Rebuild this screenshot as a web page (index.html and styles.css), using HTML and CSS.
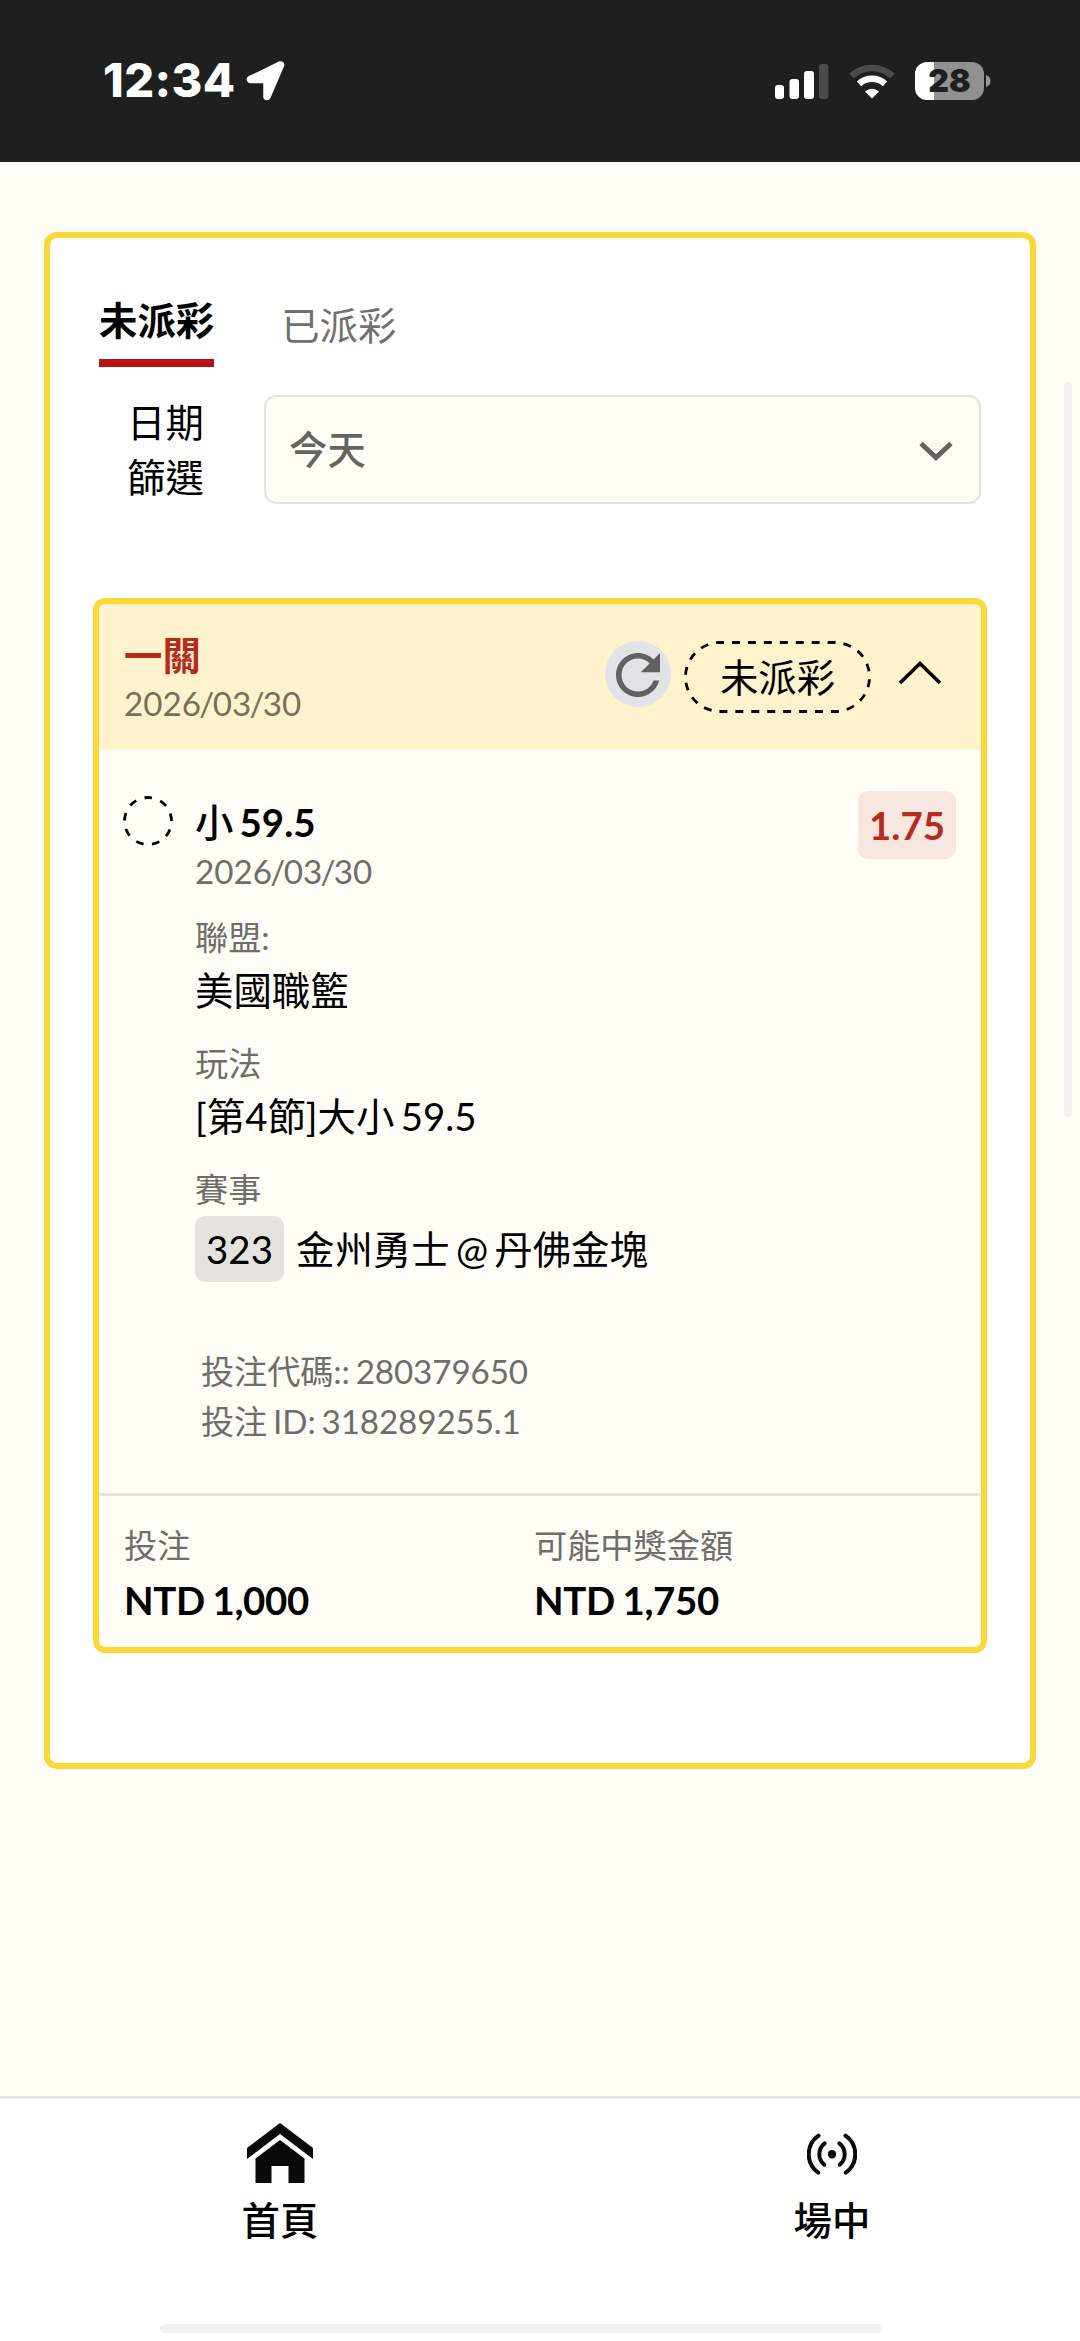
FILE: index.html
```html
<!DOCTYPE html>
<html lang="zh-Hant">
<head>
<meta charset="utf-8">
<title>投注紀錄</title>
<link rel="stylesheet" href="styles.css">
</head>
<body>
<div class="screen">
  <header class="status">
    <div class="status-left">
      <span class="clock">12:34</span>
      <svg class="location" width="39" height="40" viewBox="0 0 39 40"><path d="M34.500 4 L4.500 18.500 H21 V35.500 Z" fill="#fff" stroke="#fff" stroke-width="7.500" stroke-linejoin="round"/></svg>
    </div>
    <div class="status-right">
      <svg class="signal" width="54" height="35" viewBox="0 0 54 35">
        <rect x="0" y="21" width="9" height="14" rx="3" fill="#fff"/>
        <rect x="14.500" y="15" width="9.500" height="20" rx="3" fill="#fff"/>
        <rect x="29" y="7" width="10" height="28" rx="3" fill="#fff"/>
        <rect x="44" y="0" width="9.500" height="35" rx="3" fill="#4b4b4b"/>
      </svg>
      <svg class="wifi" width="46" height="35" viewBox="0 0 46 35">
        <path d="M2.500 12 A30 30 0 0 1 43.500 12" fill="none" stroke="#4b4b4b" stroke-width="6.500"/>
        <path d="M10 19.800 A19.500 19.500 0 0 1 36 19.800" fill="none" stroke="#fff" stroke-width="6.500"/>
        <path d="M16 27.500 A10.500 10.500 0 0 1 30 27.500 L23 34.500 Z" fill="#fff"/>
      </svg>
      <div class="battery"><span>28</span></div>
      <svg class="battery-cap" width="5" height="12" viewBox="0 0 5 12"><path d="M0 0 C6 1.500 6 10.500 0 12 Z" fill="#999"/></svg>
    </div>
  </header>

  <main class="content">
    <section class="panel">
      <nav class="tabs">
        <span class="tab tab-active">未派彩</span>
        <span class="tab">已派彩</span>
      </nav>
      <div class="filter">
        <div class="filter-label">日期<br>篩選</div>
        <div class="select">
          <span>今天</span>
          <svg width="34" height="20" viewBox="0 0 34 20"><path d="M2 2.500 L17 16.500 L32 2.500" fill="none" stroke="#666560" stroke-width="5"/></svg>
        </div>
      </div>

      <article class="bet">
        <header class="bet-head">
          <div class="bet-title">
            <h2>一關</h2>
            <p class="date">2026<i>/</i>03<i>/</i>30</p>
          </div>
          <div class="refresh">
            <svg width="66" height="66" viewBox="0 0 24 24"><path d="M17.650 6.350C16.200 4.900 14.210 4 12 4c-4.420 0-7.990 3.580-7.990 8s3.570 8 7.990 8c3.730 0 6.840-2.550 7.730-6h-2.080c-.82 2.330-3.040 4-5.650 4-3.310 0-6-2.690-6-6s2.690-6 6-6c1.660 0 3.140.69 4.220 1.780L13 11h7V4l-2.350 2.350z" fill="#616161"/></svg>
          </div>
          <div class="pill">
            <svg width="187" height="72" viewBox="0 0 187 72"><rect x="1.500" y="1.500" width="184" height="69" rx="34.500" fill="none" stroke="#000" stroke-width="2.800" pathLength="448" stroke-dasharray="8 8" stroke-dashoffset="4"/></svg>
            <span>未派彩</span>
          </div>
          <svg class="collapse" width="44" height="24" viewBox="0 0 44 24"><path d="M2 22 L22 2.500 L42 22" fill="none" stroke="#000" stroke-width="3.600"/></svg>
        </header>

        <div class="bet-body">
          <svg class="pending" width="50" height="50" viewBox="0 0 50 50"><circle cx="25" cy="25" r="23.500" fill="none" stroke="#000" stroke-width="2.800" pathLength="153" stroke-dasharray="8 9" stroke-dashoffset="8"/></svg>
          <div class="details">
            <div class="pick-row"><h3 class="pick">小 <b>59.5</b></h3><span class="odds">1.75</span></div>
            <p class="date">2026<i>/</i>03<i>/</i>30</p>
            <dl>
              <dt>聯盟:</dt><dd>美國職籃</dd>
              <dt>玩法</dt><dd>[第4節]大小 59.5</dd>
              <dt>賽事</dt><dd class="match"><span class="chip">323</span><span>金州勇士 @ 丹佛金塊</span></dd>
            </dl>
            <div class="codes"><p>投注代碼:: 280379650</p><p>投注 ID: 318289255.1</p></div>
          </div>
        </div>

        <footer class="bet-foot">
          <div><p class="foot-label">投注</p><p class="amount">NTD 1,000</p></div>
          <div><p class="foot-label">可能中獎金額</p><p class="amount">NTD 1,750</p></div>
        </footer>
      </article>
    </section>
  </main>

  <nav class="bottom-nav">
    <a class="nav-item nav-home">
      <svg width="66" height="60" viewBox="0 0 66 60"><path d="M33 0 L66 25 V36 L33 11 L0 36 V25 Z M33 17 L57.500 35.500 V60 H41.500 V43 H24.500 V60 H8.500 V35.500 Z" fill="#0a0a0a"/></svg>
      <span>首頁</span>
    </a>
    <a class="nav-item nav-live">
      <svg width="50" height="60" viewBox="0 0 50 60"><g fill="none" stroke="#0a0a0a" stroke-width="4" stroke-linecap="round"><path d="M11.500 12.700 A22.600 22.600 0 0 0 11.200 49.700"/><path d="M17.700 20.300 A13.600 13.600 0 0 0 17.300 41.700"/><path d="M38.500 12.700 A22.600 22.600 0 0 1 38.800 49.700"/><path d="M32.300 20.300 A13.600 13.600 0 0 1 32.700 41.700"/></g><circle cx="25" cy="31.200" r="4.200" fill="#0a0a0a"/></svg>
      <span>場中</span>
    </a>
  </nav>
  <div class="scrollbar"></div>
  <div class="home-bar"></div>
</div>
</body>
</html>
```

FILE: styles.css
```css
* { box-sizing: border-box; margin: 0; padding: 0; }
svg { display: block; flex: none; }
body {
  font-family: Lato, "Noto Sans CJK TC", sans-serif;
  font-size: 38.4px;
  font-weight: 400;
  word-spacing: -3.5px;
  color: #000;
  background: #fffdf6;
}
.screen { position: relative; width: 1080px; height: 2341px; display: flex; flex-direction: column; overflow: hidden; }

.status { height: 162px; background: #1f1f1f; display: flex; justify-content: space-between; padding: 61px 89px 0 103px; }
.status-left, .status-right { display: flex; height: 40px; align-items: center; }
.clock { font: 800 47px/38px Inter, sans-serif; height: 40px; letter-spacing: 0.4px; color: #fff; width: 143px; white-space: nowrap; }
.wifi { margin-left: 20px; }
.battery {
  margin-left: 20px; width: 69px; height: 38px; border-radius: 12px;
  background: linear-gradient(90deg, #fff 19px, #919191 19px);
  font: 900 32px/38px Inter, sans-serif; color: #1f1f1f; text-align: center;
}
.battery-cap { margin-left: 2px; }

.content { flex: 1; padding: 70px 44px 0; }
.panel { height: 1537px; border: 6px solid #fbd835; border-radius: 13px; background: #fff; padding: 54px 43px 0; }
.tabs { display: flex; gap: 67px; padding-left: 6px; height: 75px; }
.tab { line-height: 66px; height: 75px; color: #707070; white-space: nowrap; }
.tab-active { line-height: 56px; color: #000; font-weight: 700; border-bottom: 8px solid #b81113; }
.filter { display: flex; margin-top: 28px; height: 109px; }
.filter-label { width: 171px; padding-left: 34px; line-height: 55px; }
.select { width: 717px; border: 2px solid #e5e3de; border-radius: 12px; background: #fffdf6; color: #666560; font-weight: 500; display: flex; align-items: center; justify-content: space-between; padding: 0 26px 0 23px; }
.select span { padding-bottom: 5px; }
.select svg { margin-top: 3px; }

.bet { margin-top: 94px; height: 1055px; border: 6px solid #fbd835; border-radius: 12px; background: #fffdf6; overflow: hidden; display: flex; flex-direction: column; }
.bet-head { height: 146px; background: #fff2cc; display: flex; align-items: flex-start; padding: 0 39px 0 25px; }
.bet-title { flex: 1; padding-top: 27px; }
.bet-title h2 { font-size: 38.4px; line-height: 49px; color: #b52b20; font-weight: 700; }
.date { font-size: 33.2px; line-height: 47px; color: #6e6d69; }
.date i { font-style: normal; margin: 0 -1.7px; }
.bet-title .date { color: #77705b; }
.refresh { width: 66px; height: 66px; border-radius: 50%; background: #e2e3e7; margin: 37px 13px 0 0; }
.refresh svg { margin-top: 1px; }
.pill { width: 187px; height: 72px; margin-top: 37px; display: grid; place-items: center; }
.pill > * { grid-area: 1 / 1; }
.pill span { padding-bottom: 5px; }
.collapse { margin: 57px 0 0 27px; }

.bet-body { flex: 1; display: flex; padding: 41px 25px 0 24px; }
.pending { margin-top: 5px; }
.details { flex: 1; margin-left: 22px; }
.pick-row { display: flex; justify-content: space-between; height: 57px; }
.pick { font-size: 38.4px; line-height: 63px; font-weight: 500; }
.pick b { font-weight: 700; }
.odds { width: 98px; height: 68px; border-radius: 10px; background: #f7e7e0; color: #b52b20; font-weight: 700; line-height: 68px; text-align: center; }
dl { padding-top: 1px; }
dt { font-size: 33.2px; line-height: 50px; height: 50px; color: #6e6d69; margin-top: 16px; }
dd { line-height: 57px; height: 60px; }
dl .match { display: flex; gap: 12px; height: 66px; line-height: 66px; margin-top: 2px; }
.chip { background: #e5e3de; border-radius: 10px; width: 89px; text-align: center; }
.codes { margin: 64px 0 0 6px; font-size: 33.2px; line-height: 50px; color: #6e6d69; word-spacing: -2.5px; letter-spacing: -0.1px; }

.bet-foot { height: 154px; border-top: 3px solid #e5e3de; display: flex; padding: 25px 25px 0; }
.bet-foot > div { width: 410px; }
.foot-label { font-size: 33.2px; line-height: 49px; color: #6e6d69; }
.amount { line-height: 60px; font-weight: 700; letter-spacing: -0.3px; word-spacing: -1.5px; }

.bottom-nav { height: 245px; background: #fff; border-top: 3px solid #e4e4e4; display: flex; padding-top: 24px; }
.nav-item { flex: none; display: flex; flex-direction: column; align-items: center; font-weight: 500; line-height: 56px; gap: 9px; }
.nav-home { width: 560px; }
.nav-live { width: 544px; }

.scrollbar { position: absolute; left: 1064px; top: 382px; width: 8px; height: 735px; border-radius: 4px; background: #f3f1ed; }
.home-bar { position: absolute; left: 160px; top: 2324px; width: 722px; height: 9px; border-radius: 5px; background: #f1f1f1; }
```
